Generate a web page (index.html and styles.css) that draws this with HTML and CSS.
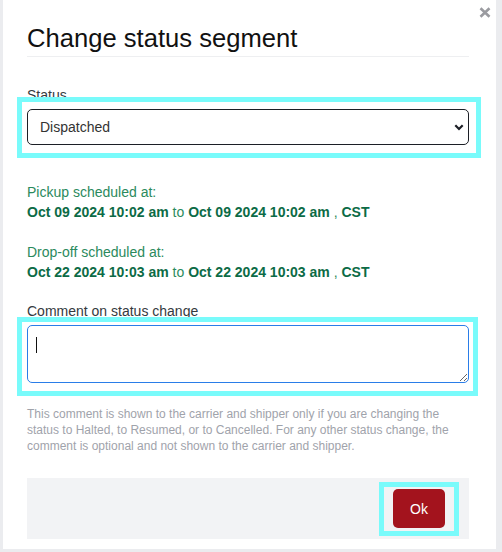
FILE: index.html
```html
<!DOCTYPE html>
<html lang="en">
<head>
<meta charset="utf-8">
<title>Change status segment</title>
<link rel="stylesheet" href="styles.css">
</head>
<body>
<div class="modal">
  <button class="close" type="button" aria-label="Close">
    <svg width="12" height="11" viewBox="0 0 12 11"><path d="M1.5 1.2 L10.5 9.8 M10.5 1.2 L1.5 9.8" stroke="#9a9ba0" stroke-width="2.6" stroke-linecap="butt" fill="none"/></svg>
  </button>
  <h2 class="title">Change status segment</h2>

  <div class="field field-status">
    <label class="label" for="status">Status</label>
    <div class="control">
      <select class="select" id="status"><option>Dispatched</option></select>
      <svg class="chevron" width="10" height="7" viewBox="0 0 10 7"><path d="M1.3 1.3 L5 5 L8.7 1.3" stroke="#1c1f26" stroke-width="2.2" fill="none"/></svg>
      <span class="highlight hl-select"></span>
    </div>
  </div>

  <div class="schedule">
    <div class="sched-label">Pickup scheduled at:</div>
    <div class="sched-value"><b>Oct 09 2024 10:02 am</b> to <b>Oct 09 2024 10:02 am</b> , <b>CST</b></div>
  </div>

  <div class="schedule">
    <div class="sched-label">Drop-off scheduled at:</div>
    <div class="sched-value"><b>Oct 22 2024 10:03 am</b> to <b>Oct 22 2024 10:03 am</b> , <b>CST</b></div>
  </div>

  <div class="field field-comment">
    <label class="label" for="comment">Comment on status change</label>
    <div class="control">
      <textarea class="textarea" id="comment"></textarea>
      <span class="caret"></span>
      <span class="highlight hl-textarea"></span>
    </div>
  </div>

  <p class="help">This comment is shown to the carrier and shipper only if you are changing the status to Halted, to Resumed, or to Cancelled. For any other status change, the comment is optional and not shown to the carrier and shipper.</p>

  <div class="footer">
    <div class="control">
      <button class="ok" type="button">Ok</button>
      <span class="highlight hl-btn"></span>
    </div>
  </div>
</div>
</body>
</html>
```
FILE: styles.css
```css
html, body {
  margin: 0;
  padding: 0;
}
body {
  background: #ebecef;
  font-family: "Liberation Sans", Arial, sans-serif;
  color: #343a40;
}
.modal {
  position: relative;
  box-sizing: border-box;
  width: 493px;
  margin-left: 3px;
  background: #ffffff;
  padding: 23px 27px 10px 24px;
}
.close {
  position: absolute;
  top: 7px;
  right: 5px;
  width: 12px;
  height: 11px;
  padding: 0;
  border: 0;
  background: transparent;
  display: block;
}
.close svg {
  display: block;
}
.title {
  margin: 0;
  padding-bottom: 3px;
  border-bottom: 1px solid #eeeff1;
  font-size: 25.6px;
  line-height: 30px;
  font-weight: normal;
  color: #111111;
}
.field {
  display: flex;
  flex-direction: column;
}
.field-status {
  margin-top: 28px;
}
.label {
  font-size: 14px;
  line-height: 20px;
  color: #343a40;
}
.control {
  position: relative;
  margin-top: 4px;
}
.select {
  display: block;
  width: 100%;
  height: 36px;
  box-sizing: border-box;
  -webkit-appearance: none;
  appearance: none;
  border: 1px solid #1c1f26;
  border-radius: 5px;
  background: #ffffff;
  padding: 0 0 0 12px;
  font-family: "Liberation Sans", Arial, sans-serif;
  font-size: 14px;
  color: #333333;
  margin: 0;
}
.chevron {
  position: absolute;
  right: 5px;
  top: 15px;
  pointer-events: none;
}
.highlight {
  position: absolute;
  border: 5px solid #79fbfb;
  pointer-events: none;
}
.hl-select {
  left: -10px;
  right: -12px;
  top: -12px;
  bottom: -13px;
}
.schedule {
  margin-top: 37px;
  font-size: 14px;
  line-height: 20px;
}
.schedule + .schedule {
  margin-top: 20px;
}
.sched-label {
  color: #2b8a5d;
}
.sched-value {
  color: #2b8a5d;
}
.sched-value b {
  color: #0c6b46;
  font-weight: bold;
}
.field-comment {
  margin-top: 19px;
}
.textarea {
  display: block;
  width: 100%;
  height: 58px;
  box-sizing: border-box;
  border: 1px solid #2a7de8;
  border-radius: 5px;
  margin: 0;
  padding: 6px 8px;
  font-family: "Liberation Sans", Arial, sans-serif;
  font-size: 14px;
  background: #ffffff;
  outline: none;
}
.caret {
  position: absolute;
  left: 9px;
  top: 12px;
  width: 1px;
  height: 16px;
  background: #111111;
}
.hl-textarea {
  left: -10px;
  right: -9px;
  top: -8px;
  bottom: -13px;
}
.help {
  margin: 23px 0 0 0;
  font-size: 12px;
  line-height: 16px;
  color: #9fa3ab;
}
.footer {
  margin-top: 24px;
  background: #f2f3f5;
  padding: 11px 24px;
  display: flex;
  justify-content: flex-end;
}
.footer .control {
  margin-top: 0;
}
.ok {
  display: block;
  width: 52px;
  height: 39px;
  border: 0;
  border-radius: 5px;
  background: #a3131d;
  color: #ffffff;
  font-family: "Liberation Sans", Arial, sans-serif;
  font-size: 14px;
  padding: 0;
}
.hl-btn {
  left: -14px;
  right: -14px;
  top: -7px;
  bottom: -8px;
}
```
